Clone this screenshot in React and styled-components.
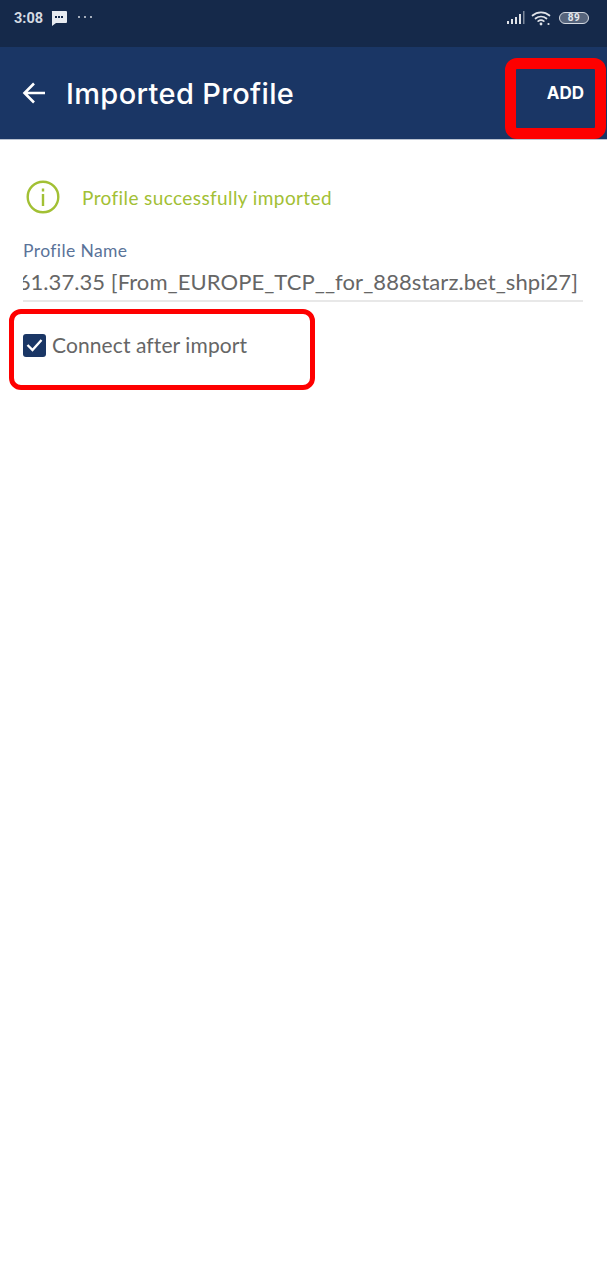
import React from 'react';
import styled, { createGlobalStyle } from 'styled-components';

const GlobalStyle = createGlobalStyle`
  html, body {
    margin: 0;
    padding: 0;
    background: #fff;
  }
`;

const Page = styled.div`
  position: relative;
  width: 607px;
  height: 1283px;
  overflow: hidden;
  background: #fff;
  font-family: Lato, 'Open Sans', sans-serif;
`;

const StatusBar = styled.div`
  height: 47px;
  background: #15294a;
  display: flex;
  align-items: flex-start;
  justify-content: space-between;
  padding: 10px 18px 0 14px;
  box-sizing: border-box;
  color: #d5dae2;
`;

const StatusGroup = styled.div`
  display: flex;
  align-items: center;
  height: 16px;
`;

const Clock = styled.span`
  font: 700 14.5px Roboto, sans-serif;
  margin-right: 8px;
`;

const Dots = styled.span`
  display: flex;
  gap: 4px;
  margin-left: 11px;
  margin-top: -2px;
`;

const Dot = styled.i`
  width: 2px;
  height: 2px;
  background: #d5dae2;
  border-radius: 50%;
`;

const Battery = styled.span`
  width: 30px;
  height: 12px;
  margin-left: 6px;
  border: 1px solid #d5dae2;
  border-radius: 6px;
  box-sizing: border-box;
  background: #56647c;
  color: #e4e7ec;
  font: 700 10px/10px Roboto, sans-serif;
  letter-spacing: 0.5px;
  text-align: center;
`;

const AppBar = styled.header`
  height: 93px;
  background: #1a3665;
  border-bottom: 1px solid #b9c2d0;
  box-sizing: border-box;
  display: flex;
  align-items: center;
  padding: 0 23px 0 22px;
  color: #fff;
`;

const Title = styled.h1`
  flex: 1;
  margin: 0 0 0 20px;
  font: 500 29px Inter, sans-serif;
  letter-spacing: 0.35px;
`;

const AddButton = styled.span`
  font: 700 17px Inter, sans-serif;
`;

const Content = styled.main`
  padding: 40px 24px 0 23px;
`;

const Notice = styled.div`
  display: flex;
  align-items: center;
  gap: 22px;
  padding-left: 3px;
  color: #a2c034;
  font-size: 19px;
  letter-spacing: 0.4px;
  height: 34px;
`;

const FieldLabel = styled.div`
  margin-top: 27px;
  color: #5a7399;
  font-size: 17.5px;
  letter-spacing: 0.4px;
  line-height: 20px;
`;

const FieldValue = styled.div`
  height: 41px;
  line-height: 42px;
  padding-right: 5px;
  overflow: hidden;
  white-space: nowrap;
  color: #666;
  font-size: 22px;
  letter-spacing: 0.07px;
  border-bottom: 2px solid #e8e8e8;
  box-sizing: border-box;
  direction: rtl;
  text-align: left;
`;

const CheckRow = styled.label`
  display: flex;
  align-items: center;
  gap: 6px;
  margin-top: 30px;
  color: #666;
  font-size: 21px;
  letter-spacing: 0.1px;
  line-height: 26px;
`;

const CheckBox = styled.span`
  width: 23px;
  height: 23px;
  border-radius: 3px;
  background: #1a3665;
  display: flex;
  align-items: center;
  justify-content: center;
`;

const Highlight = styled.div`
  position: absolute;
  left: ${p => p.$left}px;
  top: ${p => p.$top}px;
  width: ${p => p.$width}px;
  height: ${p => p.$height}px;
  border: ${p => p.$thick}px solid #fe0000;
  border-radius: ${p => p.$radius}px;
  box-sizing: border-box;
`;

const App = () => {
  return (
    <Page>
      <GlobalStyle />
      <StatusBar>
        <StatusGroup>
          <Clock>3:08</Clock>
          <svg width="16" height="15" viewBox="0 0 16 15">
            <path d="M1 0h14a1 1 0 0 1 1 1v10a1 1 0 0 1-1 1H5l-4 3V1a1 1 0 0 1 0-1z" fill="#e8ebf0" />
            <path d="M4 5h2v2H4zM7 5h2v2H7zM10 5h2v2h-2z" fill="#15294a" />
          </svg>
          <Dots><Dot /><Dot /><Dot /></Dots>
        </StatusGroup>
        <StatusGroup>
          <svg width="19" height="14" viewBox="0 0 19 14">
            <path d="M1 10h2v3H1zM5 8h2v5H5zM9 6h2v7H9zM13 3h2v10h-2z" fill="#e0e3e9" />
            <path d="M17 0h1.5v13H17z" fill="#7d899c" />
          </svg>
          <svg width="22" height="16" viewBox="0 0 22 16" style={{ marginLeft: 6 }}>
            <g fill="none" stroke="#e0e3e9" strokeWidth="1.7" strokeLinecap="round">
              <path d="M1.5 5.5a13 13 0 0 1 17 0" />
              <path d="M4.5 8.5a8.5 8.5 0 0 1 11 0" />
              <path d="M7.2 11.2a4.4 4.4 0 0 1 5.6 0" />
            </g>
            <circle cx="10" cy="14" r="1.4" fill="#e0e3e9" />
            <circle cx="17.5" cy="14" r="1.1" fill="#e0e3e9" />
          </svg>
          <Battery>89</Battery>
        </StatusGroup>
      </StatusBar>

      <AppBar>
        <svg width="24" height="24" viewBox="0 0 24 24" fill="none" stroke="#fff" strokeWidth="2.6">
          <path d="M23 12H2M12 2.5L2.5 12l9.5 9.5" />
        </svg>
        <Title>Imported Profile</Title>
        <AddButton>ADD</AddButton>
      </AppBar>

      <Content>
        <Notice>
          <svg width="34" height="34" viewBox="0 0 34 34" fill="none" stroke="#a2c034" strokeWidth="2.4">
            <circle cx="17" cy="17" r="15.3" />
            <path d="M17 14v12M17 8.5v3" />
          </svg>
          Profile successfully imported
        </Notice>
        <FieldLabel>Profile Name</FieldLabel>
        <FieldValue>
          <bdi>185.61.37.35 [From_EUROPE_TCP__for_888starz.bet_shpi27]</bdi>
        </FieldValue>
        <CheckRow>
          <CheckBox>
            <svg width="17" height="14" viewBox="0 0 17 14" fill="none" stroke="#fff" strokeWidth="2.4">
              <path d="M1.5 7l5 5L15.5 2" />
            </svg>
          </CheckBox>
          Connect after import
        </CheckRow>
      </Content>

      <Highlight $left={505} $top={58} $width={101} $height={81} $thick={11} $radius={12} />
      <Highlight $left={9} $top={309} $width={306} $height={81} $thick={5} $radius={12} />
    </Page>
  );
};

export default App;
